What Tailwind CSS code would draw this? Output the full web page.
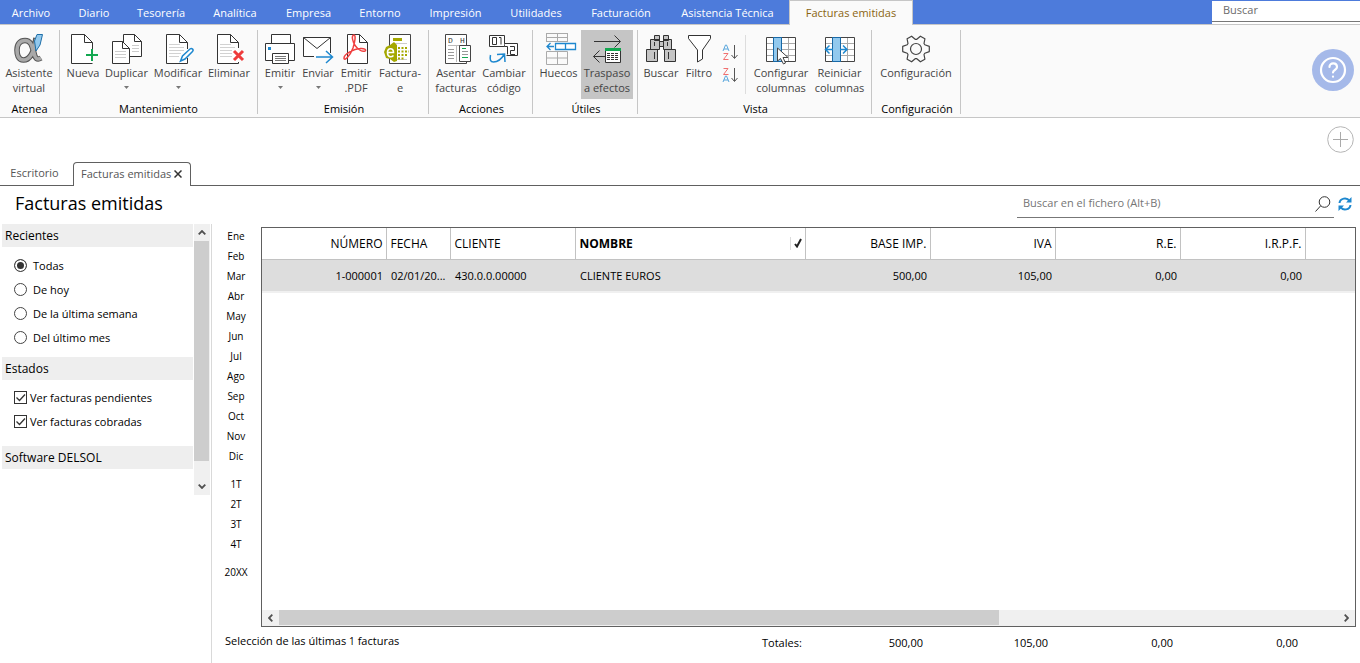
<!DOCTYPE html>
<html lang="es">
<head>
<meta charset="utf-8">
<meta name="viewport" content="width=device-width, initial-scale=1">
<title>Facturas emitidas</title>
<script src="https://cdn.jsdelivr.net/npm/@tailwindcss/browser@4"></script>
</head>
<body class="flex min-h-screen flex-col bg-white font-['Open_Sans','Noto_Sans',sans-serif] text-[11px] leading-[15px] text-black">

<!-- Menu -->
<header>
<nav class="flex h-6 items-stretch bg-[#4d7bdb] text-white" aria-label="Menú principal">
  <button class="w-16 pr-0.5 text-center">Archivo</button>
  <button class="w-[60px]">Diario</button>
  <button class="w-[74px]">Tesorería</button>
  <button class="w-[74px]">Analítica</button>
  <button class="w-[73px]">Empresa</button>
  <button class="w-[70px]">Entorno</button>
  <button class="w-[81px]">Impresión</button>
  <button class="w-20">Utilidades</button>
  <button class="w-[90px]">Facturación</button>
  <button class="w-[123px]">Asistencia Técnica</button>
  <button class="-mb-px w-[124px] border border-b-0 border-[#c6c6c6] bg-[#fafafa] pb-0.5 text-[#8a6510]">Facturas emitidas</button>
  <div class="ml-auto w-[148px] bg-white">
    <input type="text" aria-label="Buscar" placeholder="Buscar" class="block h-[22px] w-full border-t border-b border-t-[#4d7bdb] border-b-[#777] bg-white px-[11px] pb-1 outline-none placeholder:text-[#6b6b6b]">
  </div>
</nav>

<!-- Ribbon -->
<div class="flex h-[94px] border-t border-b border-[#c6c6c6] bg-[#fafafa] text-[#444]">
  <section class="flex h-[89px] w-[60px] flex-col pt-[5px]">
    <div class="flex flex-1 border-r border-[#c6c6c6] pl-px">
      <button class="flex h-[69px] w-14 flex-col items-center pt-[3px]">
        <svg class="size-8 shrink-0" viewBox="0 0 32 32" fill="none"><path d="M23 5C21.500 16 18 27 10.500 27C5 27 4 21 4 17C4 11 7 7.500 12 7.500C18 7.500 19 13 21 20C22 25 24 27.500 28 25" stroke="#555" stroke-width="5.600"/><path d="M23 6C21.500 16 18 27 10.500 27C5 27 4 21 4 17C4 11 7 7.500 12 7.500C18 7.500 19 13 21 20C22 25 24 27.500 28 25" stroke="#a9a9a9" stroke-width="3.600"/><path d="M24 1.500h5.500L27 12l-4 6-1.500-10z" fill="#92c9ee" stroke="#1f6fa8"/></svg>
        <span>Asistente<br>virtual</span>
      </button>
    </div>
    <h2 class="h-[15px] border-r border-[#c6c6c6] text-center leading-5 text-black">Atenea</h2>
  </section>

  <section class="flex h-[89px] w-[198px] flex-col pt-[5px]">
    <div class="flex flex-1 border-r border-[#c6c6c6] pl-[5px]">
      <button class="flex h-[69px] w-9 flex-col items-center pt-[3px]">
        <svg class="size-8 shrink-0" viewBox="0 0 32 32" fill="none"><path d="M25.500 16V9.500l-8-8h-13v29h21" fill="#fff" stroke="#333"/><path d="M17.500 1.500v8h8" stroke="#333"/><path d="M25 16v12M19 22h12" stroke="#12a750" stroke-width="2"/></svg>
        <span>Nueva</span>
      </button>
      <button class="flex h-[69px] w-[51px] flex-col items-center pt-[3px]">
        <svg class="size-8 shrink-0" viewBox="0 0 32 32" fill="none"><path d="M12.500 23.500v-22h11l7 7v15z" fill="#fff" stroke="#333"/><path d="M23.500 1.500v7h7" stroke="#333"/><path d="M21 12.500h7M21 15.500h7M21 18.500h7" stroke="#ccc"/><path d="M1.500 30.500v-22h10l7 7v15z" fill="#fff" stroke="#333"/><path d="M11.500 8.500v7h7" stroke="#333"/><path d="M4 18.500h11M4 21.500h11M4 24.500h11" stroke="#ccc"/></svg>
        <span>Duplicar</span>
        <svg class="mt-1.5 h-[3px] w-[5px]" viewBox="0 0 5 3"><path d="M0 0h5L2.500 3z" fill="#777"/></svg>
      </button>
      <button class="flex h-[69px] w-[52px] flex-col items-center pt-[3px]">
        <svg class="size-8 shrink-0" viewBox="0 0 32 32" fill="none"><path d="M25.500 16V9.500l-8-8h-13v29h21V25" fill="#fff" stroke="#333"/><path d="M17.500 1.500v8h8" stroke="#333"/><path d="M7 11.500h11M7 14.500h15M7 17.500h15M7 20.500h12M7 23.500h10" stroke="#d2d2d2"/><path d="M18.500 28l2-5 7.500-7c2-1.500 4 1 2.500 2.500L23 26z" fill="#fff" stroke="#1e88cf" stroke-width="1.500"/></svg>
        <span>Modificar</span>
        <svg class="mt-1.5 h-[3px] w-[5px]" viewBox="0 0 5 3"><path d="M0 0h5L2.500 3z" fill="#777"/></svg>
      </button>
      <button class="flex h-[69px] w-[50px] flex-col items-center pt-[3px]">
        <svg class="size-8 shrink-0" viewBox="0 0 32 32" fill="none"><path d="M25.500 15V9.500l-8-8h-13v29h21V29" fill="#fff" stroke="#333"/><path d="M17.500 1.500v8h8" stroke="#333"/><path d="M7 11.500h11M7 14.500h15M7 17.500h12M7 20.500h12M7 23.500h12" stroke="#d2d2d2"/><path d="M21 18l9 9M30 18l-9 9" stroke="#ee3b3b" stroke-width="3"/></svg>
        <span>Eliminar</span>
      </button>
    </div>
    <h2 class="h-[15px] border-r border-[#c6c6c6] text-center leading-5 text-black">Mantenimiento</h2>
  </section>

  <section class="flex h-[89px] w-[171px] flex-col pt-[5px]">
    <div class="flex flex-1 border-r border-[#c6c6c6] pl-[3px]">
      <button class="flex h-[69px] w-[38px] flex-col items-center pt-[3px]">
        <svg class="size-8 shrink-0" viewBox="0 0 32 32" fill="none" stroke="#333"><path d="M7.500 10.500v-9h19v9" fill="#fff"/><path d="M1.500 10.500h29v17h-29z" fill="#fff"/><path d="M8.500 20.500h16v10h-16z" fill="#fff"/><path d="M11 23.500h11M11 25.500h11M11 27.500h11" stroke="#777"/><path d="M4 14h3v3H4z" fill="#1e88cf" stroke="none"/></svg>
        <span>Emitir</span>
        <svg class="mt-1.5 h-[3px] w-[5px]" viewBox="0 0 5 3"><path d="M0 0h5L2.500 3z" fill="#777"/></svg>
      </button>
      <button class="flex h-[69px] w-[38px] flex-col items-center pt-[3px]">
        <svg class="size-8 shrink-0" viewBox="0 0 32 32" fill="none" stroke="#333"><path d="M12 23.500H1.500v-19h27V20" fill="#fff"/><path d="M1.500 4.500L15 15.500l13.500-11"/><path d="M14 24h16M24 18l6.500 6-6.500 6" stroke="#1e88cf" stroke-width="1.500"/></svg>
        <span>Enviar</span>
        <svg class="mt-1.5 h-[3px] w-[5px]" viewBox="0 0 5 3"><path d="M0 0h5L2.500 3z" fill="#777"/></svg>
      </button>
      <button class="flex h-[69px] w-[38px] flex-col items-center pt-[3px]">
        <svg class="size-8 shrink-0" viewBox="0 0 32 32" fill="none" stroke="#333"><path d="M7.500 1.500h12l8 8v21h-20z" fill="#fff"/><path d="M19.500 1.500v8h8"/><path d="M14 2c-3 0-1.500 7 1.500 11 3 4 7 6 9.500 5 2-1-1-3-5-2.500C14 16 4 21 4 25c0 4 6-2 9-10 2-6 3-13 1-13z" stroke="#f04040" stroke-width="1.500"/></svg>
        <span>Emitir<br>.PDF</span>
      </button>
      <button class="flex h-[69px] w-[50px] flex-col items-center pt-[3px]">
        <svg class="size-8 shrink-0" viewBox="0 0 32 32" fill="none"><path d="M5.500 1.500h21v29h-21z" fill="#fff" stroke="#444"/><path d="M9 5h9v3H9z" fill="#a5a800"/><path d="M9 10.500h14M11 26.500h12" stroke="#ccc"/><path d="M0 19l2-5 4-2 4-3 3 3v16l-3 1-4-3-4-1z" fill="#a5a800"/><path d="M3.500 19.500h6c0-5-6-5-6 0s4 5 6 3" stroke="#fff" stroke-width="1.600"/><g stroke="#a5a800" stroke-width="2" stroke-dasharray="2 1.500"><path d="M14 15h9M14 18.500h11M14 22h9M14 25.500h7"/></g></svg>
        <span>Factura-<br>e</span>
      </button>
    </div>
    <h2 class="h-[15px] border-r border-[#c6c6c6] pl-0.5 text-center leading-5 text-black">Emisión</h2>
  </section>

  <section class="flex h-[89px] w-[104px] flex-col pt-[5px]">
    <div class="flex flex-1 border-r border-[#c6c6c6] pl-[3px]">
      <button class="flex h-[69px] w-12 flex-col items-center pt-[3px]">
        <svg class="size-8 shrink-0" viewBox="0 0 32 32" fill="none"><path d="M5.500 1.500h21v29h-21z" fill="#fff" stroke="#444"/><g fill="#333" font-family="Liberation Mono, monospace" font-size="8"><text x="8" y="10">D</text><text x="20" y="10">H</text></g><path d="M8 12.500h12M16.500 12v17" stroke="#bbb"/><path d="M8 16.500h6M8 19.500h6M8 22.500h6M8 25.500h6" stroke="#999"/><path d="M19.500 12.500h11v16h-11z" fill="#fff" stroke="#444"/><path d="M22 15.500h4M22 24.500h6" stroke="#12a750"/><path d="M22 18.500h6M22 21.500h6" stroke="#999"/></svg>
        <span>Asentar<br>facturas</span>
      </button>
      <button class="flex h-[69px] w-12 flex-col items-center pt-[3px]">
        <svg class="size-8 shrink-0" viewBox="0 0 32 32" fill="none" stroke="#333"><path d="M1.500 2.500h15v11h-15z" fill="#fff"/><path d="M4.500 4.500h4v7h-4zM11 4.500h2v7"/><path d="M16.500 10.500h13v12h-11" fill="#fff"/><path d="M16.500 13.500h3v8M22 13.500h4.500v4h-4v4H27"/><path d="M2.500 22c-1 5 0 7 3 7 5 0 8-3 11-8M9 21.500l7.500-.500.500 8" stroke="#1e88cf" stroke-width="1.500"/></svg>
        <span>Cambiar<br>código</span>
      </button>
    </div>
    <h2 class="h-[15px] border-r border-[#c6c6c6] pl-0.5 text-center leading-5 text-black">Acciones</h2>
  </section>

  <section class="flex h-[89px] w-[105px] flex-col pt-[5px]">
    <div class="flex flex-1 border-r border-[#c6c6c6] pl-[3px]">
      <button class="flex h-[69px] w-[45px] flex-col items-center pt-[3px]">
        <svg class="size-8 shrink-0 overflow-visible" viewBox="0 0 32 32" fill="none"><path d="M3.500 0v9M24.500 0v9M14.500 0v9M3.500.500h21M3.500 8.500h21M3.500 4.500h21M3.500 18.500h21v13h-21zM3.500 25h21M14.500 18.500v13" stroke="#aaa"/><path d="M12.500 10.500h20v6h-20zM22.500 10.500v6" fill="#fff" stroke="#1e88cf" stroke-width="1.300"/><path d="M4 13.500h7M7.500 10L4 13.500 7.500 17" stroke="#1e88cf" stroke-width="1.300"/></svg>
        <span>Huecos</span>
      </button>
      <button aria-pressed="true" class="flex h-[69px] w-[52px] flex-col items-center bg-[#c5c5c5] pt-[3px]">
        <svg class="size-8 shrink-0" viewBox="0 0 32 32" fill="none" stroke="#333"><path d="M3 8.500h26M23.500 2.500l6 6-6 6M2.500 23.500H14M8.500 17.500l-6 6 6 6"/><path d="M14.500 15.500h15v14h-15z" fill="#fff"/><path d="M14 16.500h16" stroke="#12a750" stroke-width="3"/><path d="M16 20.500h12M16 22.500h12M16 24.500h12M16 26.500h12" stroke-dasharray="3 1"/></svg>
        <span>Traspaso<br>a efectos</span>
      </button>
    </div>
    <h2 class="h-[15px] border-r border-[#c6c6c6] pl-0.5 text-center leading-5 text-black">Útiles</h2>
  </section>

  <section class="flex h-[89px] w-[234px] flex-col pt-[5px]">
    <div class="flex flex-1 border-r border-[#c6c6c6] pl-[3px]">
      <button class="flex h-[69px] w-10 flex-col items-center pt-[3px]">
        <svg class="size-8 shrink-0" viewBox="0 0 32 32" fill="#c5c5c5" stroke="#333"><path d="M9.500 2.500h5v5h-5zM18.500 2.500h5v5h-5zM5.500 6.500h9v10h-9zM18.500 6.500h8v10h-8zM14.500 8.500h4v5h-4zM1.500 16.500h11v12h-11zM19.500 16.500h11v12h-11z"/><path d="M9.500 19v7M23.500 19v7M9.500 9v4M22.500 9v4"/></svg>
        <span>Buscar</span>
      </button>
      <button class="flex h-[69px] w-9 flex-col items-center pt-[3px]">
        <svg class="size-8 shrink-0" viewBox="0 0 32 32" fill="#fff" stroke="#333"><path d="M5.500 2.500h22v3l-8 11.500v9l-5 3V17l-9-11.500z"/></svg>
        <span>Filtro</span>
      </button>
      <div class="flex w-[26px] flex-col items-center gap-[5px] pt-[13px]">
        <button aria-label="Orden ascendente" class="h-[18px]"><svg class="h-[18px] w-4" viewBox="0 0 16 18" fill="none"><path d="M1 8l2.500-6h1L7 8M2 6h4" stroke="#59a6dc"/><path d="M1.500 10.500H6L1.500 16.500h5" stroke="#f07070"/><path d="M12.500 2v13M9.500 12l3 3.500 3-3.500" stroke="#555"/></svg></button>
        <button aria-label="Orden descendente" class="h-[18px]"><svg class="h-[18px] w-4" viewBox="0 0 16 18" fill="none"><path d="M1.500 2.500H6L1.500 8.500h5" stroke="#f07070"/><path d="M1 16l2.500-6h1L7 16M2 14h4" stroke="#59a6dc"/><path d="M12.500 2v13M9.500 12l3 3.500 3-3.500" stroke="#555"/></svg></button>
      </div>
      <div class="mt-[5px] ml-0.5 h-[59px] w-px bg-[#ddd]"></div>
      <button class="ml-[5px] flex h-[69px] w-[60px] flex-col items-center pt-[3px]">
        <svg class="size-8 shrink-0" viewBox="0 0 32 32" fill="none"><path d="M1.500 4.500h29v24h-29z" fill="#fff" stroke="#444"/><path d="M2 10.500h28M2 16.500h28M2 22.500h28M23.500 5v23" stroke="#aaa"/><path d="M8.500 4.500h8v24h-8z" fill="#92c9ee" stroke="#1769a8"/><path d="M12.500 15v13l3-2.500 3 5.500 2-1-2.500-5.500H23z" fill="#fff" stroke="#444"/></svg>
        <span>Configurar<br>columnas</span>
      </button>
      <button class="flex h-[69px] w-[57px] flex-col items-center pt-[3px]">
        <svg class="size-8 shrink-0" viewBox="0 0 32 32" fill="none"><path d="M1.500 4.500h29v24h-29z" fill="#fff" stroke="#444"/><path d="M2 10.500h28M2 16.500h28M2 22.500h28M23.500 5v23" stroke="#aaa"/><path d="M8.500 4.500h8v24h-8z" fill="#92c9ee" stroke="#1769a8"/><path d="M2 16.500h7M5.500 12.500l-4 4 4 4M16 16.500h6M19 12.500l4 4-4 4" stroke="#1e88cf" stroke-width="1.500"/></svg>
        <span>Reiniciar<br>columnas</span>
      </button>
    </div>
    <h2 class="h-[15px] border-r border-[#c6c6c6] pl-0.5 text-center leading-5 text-black">Vista</h2>
  </section>

  <section class="flex h-[89px] w-[89px] flex-col pt-[5px]">
    <div class="flex flex-1 border-r border-[#c6c6c6]">
      <button class="flex h-[69px] w-[88px] flex-col items-center pt-[3px]">
        <svg class="size-8 shrink-0" viewBox="-16 -16 32 32" fill="none" stroke="#444" stroke-width="1.200" stroke-linejoin="round"><path d="M8.800-4.200L13.300-2.600V2.600L8.800 4.200L8 5.500L8.900 10.200L4.400 12.800L.8 9.700H-.8L-4.400 12.800L-8.900 10.200L-8 5.500L-8.800 4.200L-13.300 2.600V-2.600L-8.800-4.200L-8-5.500L-8.900-10.200L-4.400-12.800L-.8-9.700H.8L4.400-12.800L8.900-10.200L8-5.500Z"/><circle r="5.500"/></svg>
        <span>Configuración</span>
      </button>
    </div>
    <h2 class="h-[15px] border-r border-[#c6c6c6] pl-0.5 text-center leading-5 text-black">Configuración</h2>
  </section>

  <button aria-label="Ayuda" class="mt-6 mr-1.5 ml-auto size-[42px] shrink-0 rounded-full bg-[#a5b9e9]">
    <svg class="size-[42px]" viewBox="0 0 42 42" fill="none" stroke="#fff" stroke-width="2.200" stroke-linecap="round"><circle cx="21" cy="21" r="12"/><path d="M17.500 18c0-5 7.500-4.500 7.500 0 0 3-4 3-4 5.500"/><path d="M21 27.500v.2"/></svg>
  </button>
</div>
</header>

<!-- Document tabs -->
<div class="flex h-[68px] items-end border-b border-[#606060] text-[#555]">
  <button class="h-6 w-[73px] pr-1 pb-0.5 text-center">Escritorio</button>
  <div class="-mb-px flex h-6 w-[118px] items-center gap-[3px] rounded-t-[4px] border border-b-0 border-[#606060] bg-white pb-0.5 pl-[7px]">
    <button>Facturas emitidas</button>
    <button aria-label="Cerrar pestaña"><svg class="size-2" viewBox="0 0 8 8"><path d="M.5.500l7 7M7.500.500l-7 7" stroke="#333" stroke-width="1.500"/></svg></button>
  </div>
  <button aria-label="Añadir" class="mt-2 mr-1.5 ml-auto size-[27px] self-start"><svg class="size-[27px]" viewBox="0 0 27 27" fill="none"><circle cx="13.500" cy="13.500" r="12.800" stroke="#b5b5b5"/><path d="M13.500 6v15M6 13.500h15" stroke="#aaa"/></svg></button>
</div>

<div class="flex h-[38px] items-start pr-2">
  <h1 class="pt-[5px] pl-[15px] text-[18px] leading-6">Facturas emitidas</h1>
  <div class="ml-auto flex h-8 w-[317px] items-center border-b border-[#777]">
    <input type="search" aria-label="Buscar en el fichero" placeholder="Buscar en el fichero (Alt+B)" class="h-7 flex-1 px-1.5 pt-0.5 outline-none placeholder:text-[#757575]">
    <button aria-label="Buscar" class="mt-1 mr-[3px]"><svg class="size-4" viewBox="0 0 16 16" fill="none" stroke="#333"><circle cx="9.500" cy="6" r="5.300"/><path d="M5.500 10L.5 15.500"/></svg></button>
  </div>
  <button aria-label="Actualizar" class="mt-[11px] ml-1"><svg class="size-3.5" viewBox="0 0 14 14" fill="none" stroke="#1e88cf" stroke-width="2"><path d="M1.500 6C2 1 9 0 11.500 4M12.500 8C12 13 5 14 2.500 10"/><path d="M13.500 0v5.500H8zM.5 14V8.500H6z" fill="#1e88cf" stroke="none"/></svg></button>
</div>

<main class="flex flex-1">
  <!-- Filters -->
  <aside class="flex w-[212px] shrink-0 items-start border-r border-[#d9d9d9] pl-0.5">
    <div class="w-[191px]">
      <fieldset class="h-[133px]">
        <legend class="block h-[23px] w-full bg-[#eee] px-[3px] pt-1 text-[12px]">Recientes</legend>
        <div class="flex flex-col gap-2 pt-2.5 pl-3">
          <label class="flex h-4 items-center gap-1.5"><input type="radio" name="rec" checked class="size-[13px] appearance-none rounded-full border border-[#444] checked:bg-[#333] checked:shadow-[inset_0_0_0_2px_white]">Todas</label>
          <label class="flex h-4 items-center gap-1.5"><input type="radio" name="rec" class="size-[13px] appearance-none rounded-full border border-[#444] checked:bg-[#333] checked:shadow-[inset_0_0_0_2px_white]">De hoy</label>
          <label class="flex h-4 items-center gap-1.5"><input type="radio" name="rec" class="size-[13px] appearance-none rounded-full border border-[#444] checked:bg-[#333] checked:shadow-[inset_0_0_0_2px_white]">De la última semana</label>
          <label class="flex h-4 items-center gap-1.5"><input type="radio" name="rec" class="size-[13px] appearance-none rounded-full border border-[#444] checked:bg-[#333] checked:shadow-[inset_0_0_0_2px_white]">Del último mes</label>
        </div>
      </fieldset>
      <fieldset class="h-[89px]">
        <legend class="block h-[23px] w-full bg-[#eee] px-[3px] pt-1 text-[12px]">Estados</legend>
        <div class="flex flex-col gap-2 pt-[9px] pl-3">
          <label class="relative flex h-4 items-center gap-[3px]"><input type="checkbox" checked class="peer size-[13px] appearance-none border border-[#333]"><svg class="absolute top-0.5 left-0 hidden size-[13px] peer-checked:block" viewBox="0 0 13 13" fill="none"><path d="M2.500 6.500l3 3 5.500-6" stroke="#333" stroke-width="1.300"/></svg>Ver facturas pendientes</label>
          <label class="relative flex h-4 items-center gap-[3px]"><input type="checkbox" checked class="peer size-[13px] appearance-none border border-[#333]"><svg class="absolute top-0.5 left-0 hidden size-[13px] peer-checked:block" viewBox="0 0 13 13" fill="none"><path d="M2.500 6.500l3 3 5.500-6" stroke="#333" stroke-width="1.300"/></svg>Ver facturas cobradas</label>
        </div>
      </fieldset>
      <h2 class="h-[23px] bg-[#eee] px-[3px] pt-1 text-[12px]">Software DELSOL</h2>
    </div>
    <div class="ml-px flex h-[271px] w-4 flex-col bg-[#f0f0f0]">
      <button aria-label="Subir" class="flex h-[17px] items-center justify-center"><svg class="h-[5px] w-2" viewBox="0 0 8 5" fill="none"><path d="M.7 4.300L4 1l3.300 3.300" stroke="#505050" stroke-width="1.800"/></svg></button>
      <div class="h-[220px] w-[15px] bg-[#cdcdcd]"></div>
      <button aria-label="Bajar" class="mt-auto flex h-[17px] items-center justify-center"><svg class="h-[5px] w-2" viewBox="0 0 8 5" fill="none"><path d="M.7.700L4 4 7.300.700" stroke="#505050" stroke-width="1.800"/></svg></button>
    </div>
  </aside>

  <div class="flex min-w-0 flex-1 flex-col pt-[3px]">
    <div class="flex flex-1">
      <!-- Periods -->
      <nav class="flex w-[49px] shrink-0 flex-col pr-px text-[10px] [&>button]:pb-0.5" aria-label="Periodos">
        <button class="h-5">Ene</button><button class="h-5">Feb</button><button class="h-5">Mar</button><button class="h-5">Abr</button><button class="h-5">May</button><button class="h-5">Jun</button><button class="h-5">Jul</button><button class="h-5">Ago</button><button class="h-5">Sep</button><button class="h-5">Oct</button><button class="h-5">Nov</button><button class="h-5">Dic</button>
        <button class="mt-2 h-5">1T</button><button class="h-5">2T</button><button class="h-5">3T</button><button class="h-5">4T</button>
        <button class="mt-2 h-5">20XX</button>
      </nav>
      <!-- Invoices -->
      <div class="mr-1 flex min-w-0 flex-1 flex-col border border-[#606060]">
        <div class="flex-1 overflow-hidden">
        <table class="w-full table-fixed border-collapse text-[12px]">
          <colgroup><col class="w-[124px]"><col class="w-16"><col class="w-[125px]"><col class="w-[230px]"><col class="w-[125px]"><col class="w-[125px]"><col class="w-[125px]"><col class="w-[125px]"><col></colgroup>
          <thead>
            <tr class="h-[31px] border-b border-[#c2c2c2] [&>th]:border-r [&>th]:border-[#c2c2c2] [&>th]:pr-[3px] [&>th]:pl-1 [&>th]:font-normal">
              <th class="text-right">NÚMERO</th><th class="text-left">FECHA</th><th class="text-left">CLIENTE</th>
              <th class="text-left"><div class="flex items-center justify-between"><b>NOMBRE</b><span class="flex h-[13px] items-center border-l border-[#ddd] pl-[3px]"><svg class="h-2.5 w-2" viewBox="0 0 8 10" fill="none"><path d="M1 6l2 2.500L7 1" stroke="#222" stroke-width="2"/></svg></span></div></th>
              <th class="text-right">BASE IMP.</th><th class="text-right">IVA</th><th class="text-right">R.E.</th><th class="text-right">I.R.P.F.</th><th class="border-r-0!"></th>
            </tr>
          </thead>
          <tbody>
            <tr class="h-[33px] border-b-2 border-[#f0f0f0] bg-[#ddd] text-[11px] [&>td]:pr-[3px] [&>td]:pl-[5px]">
              <td class="text-right">1-000001</td><td class="whitespace-nowrap">02/01/20...</td><td>430.0.0.00000</td><td>CLIENTE EUROS</td><td class="text-right">500,00</td><td class="text-right">105,00</td><td class="text-right">0,00</td><td class="text-right">0,00</td><td></td>
            </tr>
          </tbody>
        </table>
        </div>
        <div class="flex h-4 bg-[#f0f0f0]">
          <button aria-label="Desplazar a la izquierda" class="flex w-[17px] items-center justify-center"><svg class="h-2 w-[5px]" viewBox="0 0 5 8" fill="none"><path d="M4.300.700L1 4l3.300 3.300" stroke="#505050" stroke-width="1.800"/></svg></button>
          <div class="flex-1"><div class="h-[15px] w-[68%] bg-[#cdcdcd]"></div></div>
          <button aria-label="Desplazar a la derecha" class="flex w-[17px] items-center justify-center"><svg class="h-2 w-[5px]" viewBox="0 0 5 8" fill="none"><path d="M.7.700L4 4 .7 7.300" stroke="#505050" stroke-width="1.800"/></svg></button>
        </div>
      </div>
    </div>
    <!-- Totals -->
    <footer class="flex h-9 pt-1.5 pl-[13px]">
      <p class="w-[537px]">Selección de las últimas <span class="text-[10px]">1</span> facturas</p>
      <dl class="flex pt-0.5">
        <dt class="w-10">Totales:</dt>
        <dd class="w-[121px] text-right">500,00</dd><dd class="w-[125px] text-right">105,00</dd><dd class="w-[125px] text-right">0,00</dd><dd class="w-[125px] text-right">0,00</dd>
      </dl>
    </footer>
  </div>
</main>
</body>
</html>
